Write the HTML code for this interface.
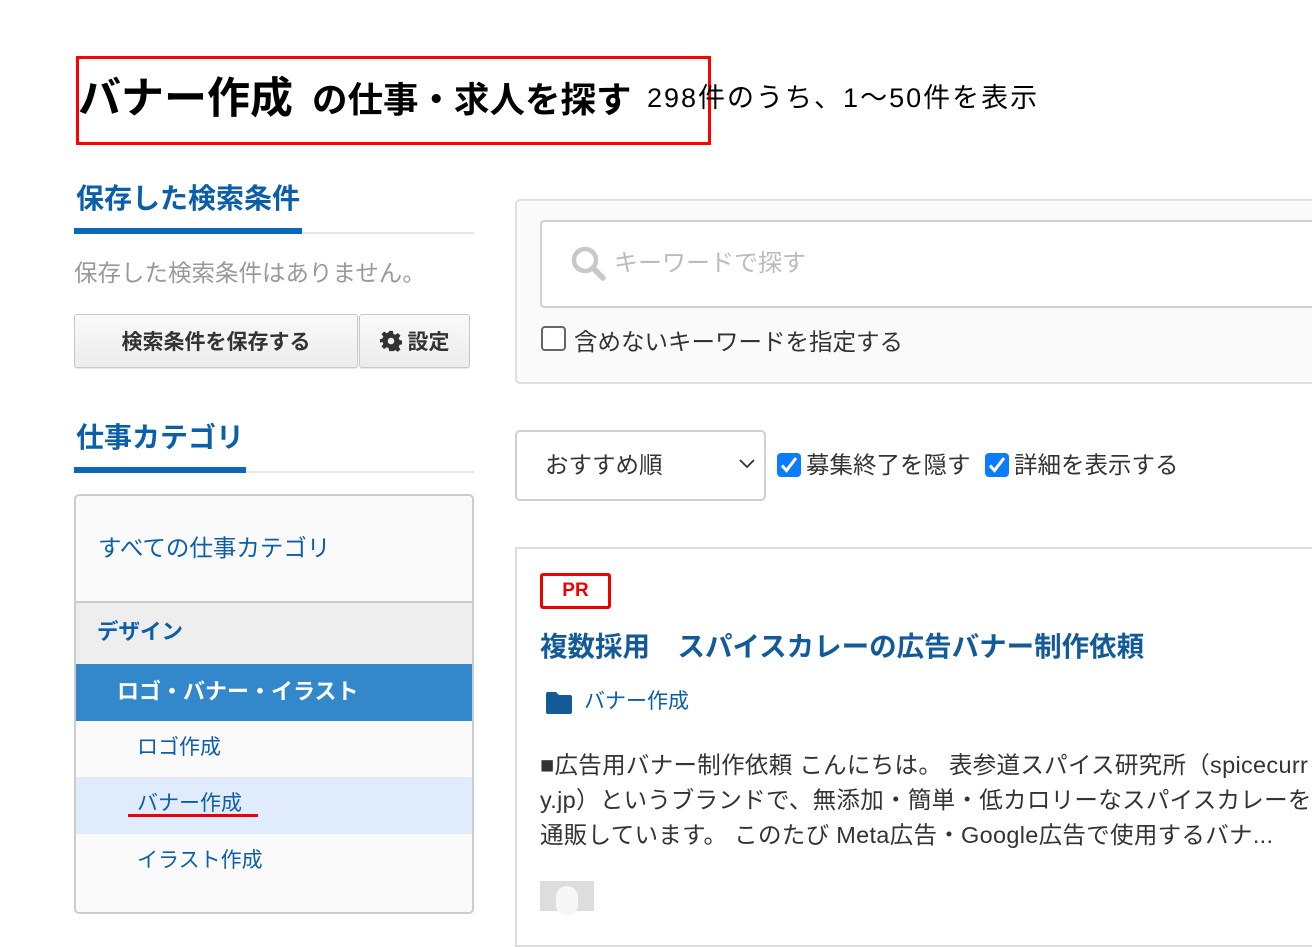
<!DOCTYPE html>
<html><head><meta charset="utf-8">
<style>
*{margin:0;padding:0;box-sizing:border-box}
body{width:1312px;height:906px;overflow:hidden;background:#fff;font-family:"Liberation Sans","Noto Sans CJK JP",sans-serif;color:#333;position:relative}
.a{position:absolute;white-space:nowrap}
.blue{color:#0b5ea8}
.btn{position:absolute;border:1px solid #c8c8c8;border-radius:3px;background:linear-gradient(#fafafa,#ececec);font-weight:bold;font-size:21px;color:#333;display:flex;align-items:center;justify-content:center;box-shadow:0 1px 1px rgba(0,0,0,.1)}
.cb{position:absolute;width:24px;height:24px;border-radius:4px;background:#0a7cff}
</style></head><body>

<div class="a" style="left:76px;top:56px;width:635px;height:89px;border:3px solid #f00"></div>
<div class="a" style="left:78px;top:74px;font-size:43px;font-weight:bold;color:#000;line-height:50px">バナー作成</div>
<div class="a" style="left:312px;top:79px;font-size:35.5px;font-weight:bold;color:#000;line-height:42px">の仕事・求人を探す</div>
<div class="a" style="left:647px;top:81px;font-size:27px;letter-spacing:2px;color:#000;line-height:34px">298件のうち、1〜50件を表示</div>

<div class="a blue" style="left:76px;top:181px;font-size:28px;font-weight:bold;line-height:36px">保存した検索条件</div>
<div class="a" style="left:74px;top:232px;width:400px;height:2px;background:#e5e5e5"></div>
<div class="a" style="left:74px;top:228px;width:228px;height:6px;background:#0b68b8"></div>
<div class="a" style="left:74px;top:257px;font-size:23.5px;color:#999;line-height:32px">保存した検索条件はありません。</div>
<div class="btn" style="left:74px;top:314px;width:284px;height:54px">検索条件を保存する</div>
<div class="btn" style="left:359px;top:314px;width:111px;height:54px"><svg width="22" height="22" viewBox="0 0 24 24" style="margin-right:6px"><path fill="#333" d="M10 1h4l.6 3.2 2.2 1 2.7-1.9 2.8 2.8-1.9 2.7 1 2.2 3.2.6v4l-3.2.6-1 2.2 1.9 2.7-2.8 2.8-2.7-1.9-2.2 1L14 23h-4l-.6-3.2-2.2-1-2.7 1.9-2.8-2.8 1.9-2.7-1-2.2L-.6 14v-4l3.2-.6 1-2.2L1.7 4.5l2.8-2.8 2.7 1.9 2.2-1z"/><circle cx="12" cy="12" r="3.6" fill="#f3f3f3"/></svg>設定</div>

<div class="a blue" style="left:76px;top:420px;font-size:28px;font-weight:bold;line-height:36px">仕事カテゴリ</div>
<div class="a" style="left:74px;top:471px;width:400px;height:2px;background:#e5e5e5"></div>
<div class="a" style="left:74px;top:467px;width:172px;height:6px;background:#0b68b8"></div>

<div class="a" style="left:74px;top:494px;width:400px;height:420px;border:2px solid #ccc;border-radius:5px;background:#fafafa;overflow:hidden">
  <div class="a blue" style="left:22px;top:36px;font-size:23.5px;line-height:32px">すべての仕事カテゴリ</div>
  <div class="a" style="left:0;top:105px;width:400px;height:2px;background:#ccc"></div>
  <div class="a" style="left:0;top:107px;width:400px;height:61px;background:#eee"></div>
  <div class="a blue" style="left:21px;top:122px;font-size:21.5px;font-weight:bold;line-height:28px">デザイン</div>
  <div class="a" style="left:0;top:168px;width:400px;height:57px;background:#3388cc"></div>
  <div class="a" style="left:41px;top:181px;font-size:22px;font-weight:bold;color:#fff;line-height:30px">ロゴ・バナー・イラスト</div>
  <div class="a blue" style="left:61px;top:238px;font-size:21px;line-height:28px">ロゴ作成</div>
  <div class="a" style="left:0;top:281px;width:400px;height:57px;background:#e0ecfb"></div>
  <div class="a blue" style="left:61px;top:294px;font-size:21px;line-height:28px">バナー作成</div>
  <div class="a" style="left:52px;top:318px;width:130px;height:3px;background:#e8000b"></div>
  <div class="a blue" style="left:61px;top:351px;font-size:21px;line-height:28px">イラスト作成</div>
</div>

<div class="a" style="left:515px;top:199px;width:820px;height:185px;border:2px solid #e0e0e0;border-radius:5px;background:#fafafa"></div>
<div class="a" style="left:540px;top:220px;width:800px;height:88px;border:2px solid #d0d0d0;border-radius:4px;background:#fff"></div>
<svg class="a" style="left:570px;top:245px" width="38" height="38" viewBox="0 0 38 38"><circle cx="15" cy="15" r="11" fill="none" stroke="#c8c8c8" stroke-width="4.5"/><path d="M23 23l10 10" stroke="#c8c8c8" stroke-width="5.5" stroke-linecap="round"/></svg>
<div class="a" style="left:614px;top:248px;font-size:24px;color:#bbb;line-height:32px">キーワードで探す</div>
<div class="a" style="left:541px;top:326px;width:25px;height:25px;border:2px solid #666;border-radius:4px;background:#fff"></div>
<div class="a" style="left:574px;top:326px;font-size:23.5px;color:#333;line-height:32px">含めないキーワードを指定する</div>

<div class="a" style="left:515px;top:430px;width:251px;height:71px;border:2px solid #d0d0d0;border-radius:5px;background:#fff"></div>
<div class="a" style="left:545px;top:449px;font-size:23.5px;color:#333;line-height:32px">おすすめ順</div>
<svg class="a" style="left:738px;top:458px" width="18" height="12" viewBox="0 0 18 12"><path d="M2 2l7 7 7-7" fill="none" stroke="#333" stroke-width="1.8"/></svg>
<div class="cb" style="left:777px;top:453px"><svg width="24" height="24" viewBox="0 0 24 24"><path d="M5 12.5l4.5 5L19 5" fill="none" stroke="#fff" stroke-width="3"/></svg></div>
<div class="a" style="left:806px;top:449px;font-size:23.5px;color:#333;line-height:32px">募集終了を隠す</div>
<div class="cb" style="left:985px;top:453px"><svg width="24" height="24" viewBox="0 0 24 24"><path d="M5 12.5l4.5 5L19 5" fill="none" stroke="#fff" stroke-width="3"/></svg></div>
<div class="a" style="left:1014px;top:449px;font-size:23.5px;color:#333;line-height:32px">詳細を表示する</div>

<div class="a" style="left:515px;top:547px;width:820px;height:400px;border:2px solid #ddd;background:#fff"></div>
<div class="a" style="left:540px;top:573px;width:71px;height:36px;border:3px solid #e00;border-radius:3px;color:#e00;font-weight:bold;font-size:19px;text-align:center;line-height:30px">PR</div>
<div class="a" style="left:540px;top:628px;font-size:27.5px;font-weight:bold;color:#135a99;line-height:38px">複数採用　スパイスカレーの広告バナー制作依頼</div>
<svg class="a" style="left:545px;top:691px" width="28" height="24" viewBox="0 0 28 24"><path d="M1 3a2 2 0 0 1 2-2h8l3 3h11a2 2 0 0 1 2 2v15a2 2 0 0 1-2 2H3a2 2 0 0 1-2-2z" fill="#135a99"/></svg>
<div class="a blue" style="left:584px;top:688px;font-size:21px;line-height:28px">バナー作成</div>
<div class="a" style="left:540px;top:748px;font-size:23.5px;letter-spacing:0.3px;color:#333;line-height:35px">■広告用バナー制作依頼 こんにちは。 表参道スパイス研究所（spicecurr<br>y.jp）というブランドで、無添加・簡単・低カロリーなスパイスカレーを<br>通販しています。 このたび Meta広告・Google広告で使用するバナ...</div>
<div class="a" style="left:540px;top:881px;width:54px;height:30px;background:#ddd"></div>
<div class="a" style="left:556px;top:886px;width:22px;height:30px;border-radius:11px;background:#f7f7f7"></div>
</body></html>
